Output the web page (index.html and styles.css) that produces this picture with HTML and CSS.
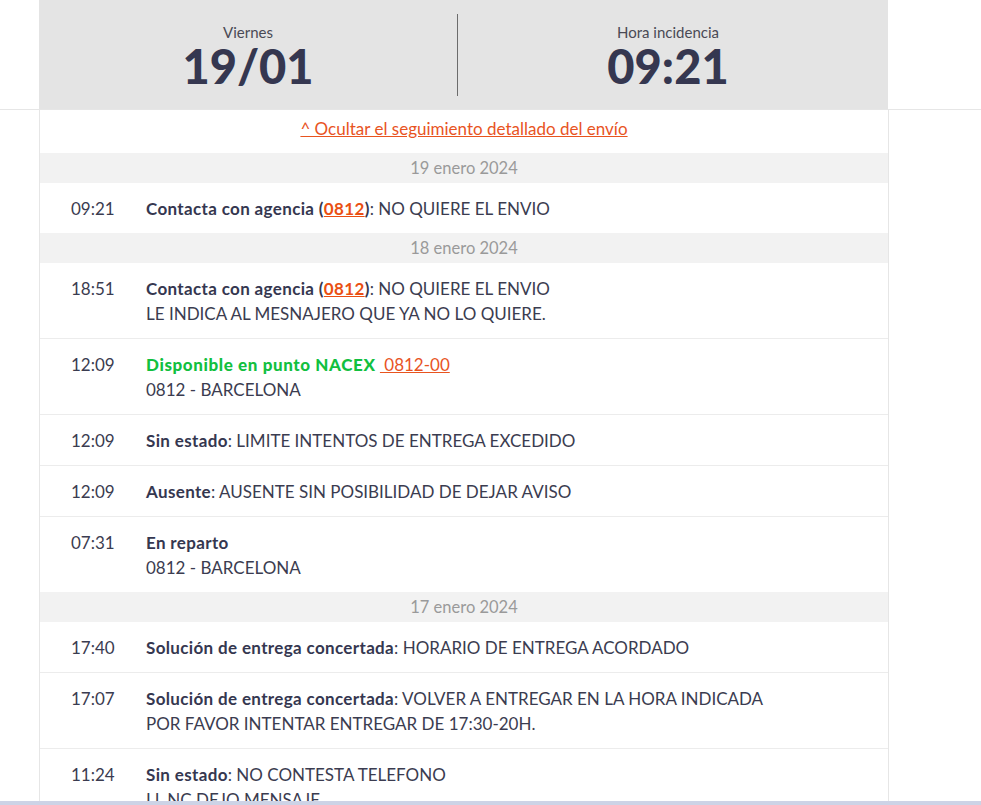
FILE: index.html
```html
<!DOCTYPE html>
<html lang="es">
<head>
<meta charset="utf-8">
<link rel="stylesheet" href="styles.css">
</head>
<body>
<div class="top">
  <div class="summary">
    <div class="cell left">
      <div class="label">Viernes</div>
      <div class="big">19/01</div>
    </div>
    <div class="divider"></div>
    <div class="cell right">
      <div class="label">Hora incidencia</div>
      <div class="big">09:21</div>
    </div>
  </div>
</div>
<div class="card">
  <div class="toggle"><a href="#">^ Ocultar el seguimiento detallado del envío</a></div>

  <div class="day">19 enero 2024</div>
  <div class="row"><div class="time">09:21</div><div class="txt"><b>Contacta con agencia (<a class="code" href="#">0812</a>)</b>: NO QUIERE EL ENVIO</div></div>

  <div class="day">18 enero 2024</div>
  <div class="row"><div class="time">18:51</div><div class="txt"><b>Contacta con agencia (<a class="code" href="#">0812</a>)</b>: NO QUIERE EL ENVIO<br>LE INDICA AL MESNAJERO QUE YA NO LO QUIERE.</div></div>
  <div class="row"><div class="time">12:09</div><div class="txt"><b class="green">Disponible en punto NACEX</b> <a class="pt" href="#">&nbsp;0812-00</a><br>0812 - BARCELONA</div></div>
  <div class="row"><div class="time">12:09</div><div class="txt"><b>Sin estado</b>: LIMITE INTENTOS DE ENTREGA EXCEDIDO</div></div>
  <div class="row"><div class="time">12:09</div><div class="txt"><b>Ausente</b>: AUSENTE SIN POSIBILIDAD DE DEJAR AVISO</div></div>
  <div class="row"><div class="time">07:31</div><div class="txt"><b>En reparto</b><br>0812 - BARCELONA</div></div>

  <div class="day">17 enero 2024</div>
  <div class="row"><div class="time">17:40</div><div class="txt"><b>Solución de entrega concertada</b>: HORARIO DE ENTREGA ACORDADO</div></div>
  <div class="row"><div class="time">17:07</div><div class="txt"><b>Solución de entrega concertada</b>: VOLVER A ENTREGAR EN LA HORA INDICADA<br>POR FAVOR INTENTAR ENTREGAR DE 17:30-20H.</div></div>
  <div class="row"><div class="time">11:24</div><div class="txt"><b>Sin estado</b>: NO CONTESTA TELEFONO<br>LL NC DEJO MENSAJE</div></div>
</div>
<div class="edge"></div>
</body>
</html>
```
FILE: styles.css
```css
html, body {
  margin: 0;
  padding: 0;
  background: #fff;
  height: 805px;
  overflow: hidden;
}
body {
  font-family: Lato, "Noto Sans", sans-serif;
  color: #3b3c50;
  font-size: 17px;
}
.top {
  border-bottom: 1px solid #e6e6e6;
}
.summary {
  margin-left: 39px;
  width: 849px;
  height: 109px;
  background: #e4e4e4;
  display: flex;
  align-items: center;
}
.cell {
  text-align: center;
  padding-top: 2px;
}
.cell.left {
  width: 418px;
}
.cell.right {
  width: 420px;
}
.divider {
  width: 1px;
  height: 82px;
  background: #6c6c6c;
}
.label {
  font-size: 15px;
  color: #4a4a55;
  line-height: 18px;
  margin-bottom: 2px;
}
.big {
  font-size: 47px;
  font-weight: 900;
  color: #353750;
  line-height: 46px;
}
.card {
  margin-left: 39px;
  width: 848px;
  border-left: 1px solid #e6e6e6;
  border-right: 1px solid #e6e6e6;
}
.toggle {
  text-align: center;
  height: 43px;
  line-height: 37px;
}
.toggle a {
  color: #e8541f;
  text-decoration: underline;
}
.day {
  background: #f2f2f2;
  text-align: center;
  color: #9a9a9a;
  font-size: 16.5px;
  height: 30px;
  line-height: 30px;
}
.row {
  display: flex;
  padding: 13px 0 12px 31px;
  line-height: 25px;
  border-bottom: 1px solid #ececec;
}
.row:has(+ .day) {
  border-bottom: none;
  padding-bottom: 12px;
}
.time {
  width: 75px;
  flex: none;
  color: #3b3c50;
}
.txt {
  color: #3b3c50;
}
.txt b {
  font-weight: 700;
  color: #353750;
  letter-spacing: 0.35px;
}
.code {
  color: #ea4f12;
  font-weight: 700;
  text-decoration: underline;
}
.txt b.green {
  color: #12c03f;
  font-weight: 900;
  letter-spacing: 0.6px;
}
.pt {
  color: #e8541f;
  text-decoration: underline;
}
.edge {
  position: fixed;
  left: 0;
  right: 0;
  bottom: 0;
  height: 4px;
  background: #cdd3e6;
}
```
